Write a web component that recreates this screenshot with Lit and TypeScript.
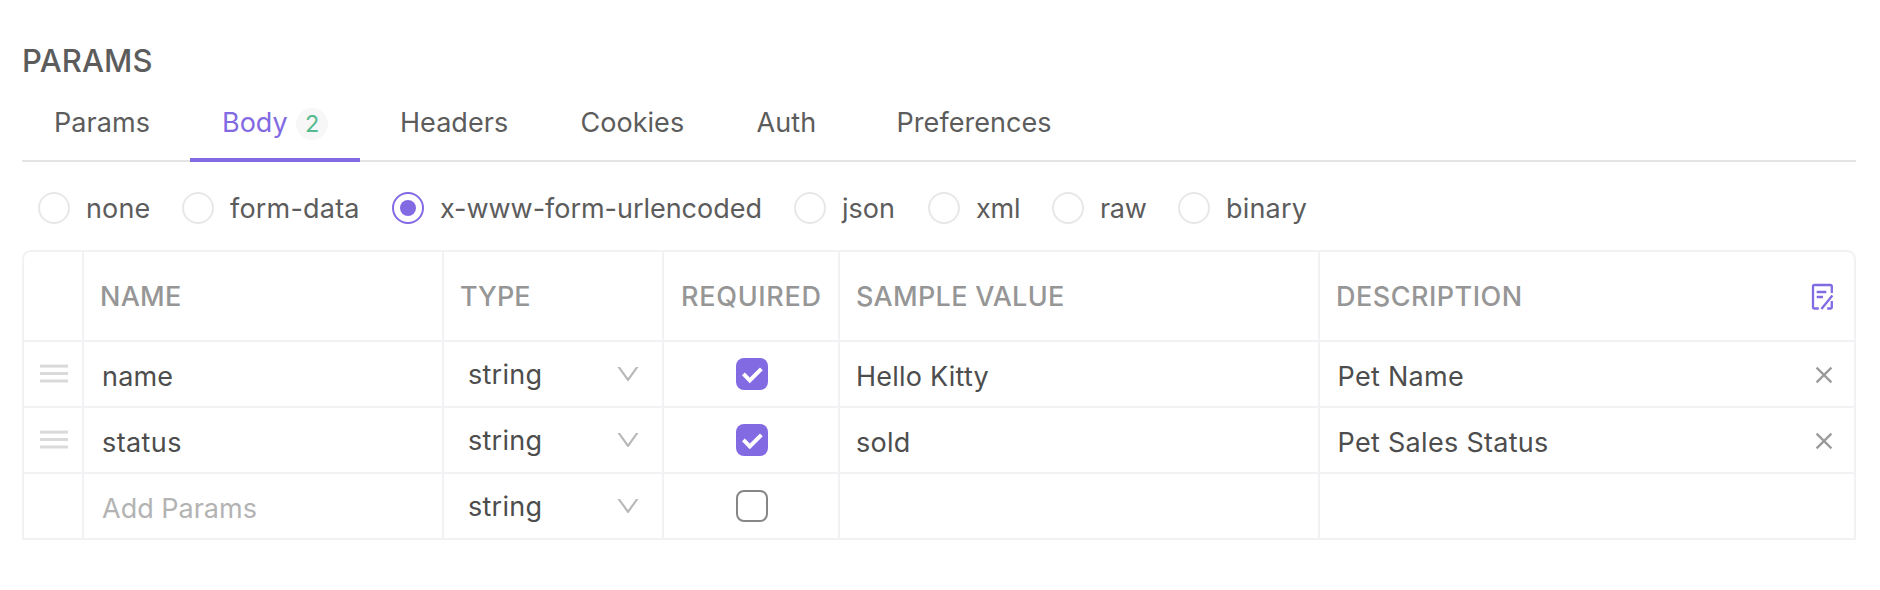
import { LitElement, html, css, svg, nothing } from "lit";
import { customElement, property, state } from "lit/decorators.js";
import { classMap } from "lit/directives/class-map.js";
import { styleMap } from "lit/directives/style-map.js";

interface Tab { label: string; width: number; tracking: number; count?: number; }
interface BodyType { label: string; width: number; tracking: number; }
interface Param { name: string; nameTracking: number; required: boolean; sample: string; description: string; blank?: boolean; }

const TABS: Tab[] = [
  { label: "Params", width: 96, tracking: 0.05 },
  { label: "Body", width: 106, tracking: 0, count: 2 },
  { label: "Headers", width: 108.5, tracking: 0.04 },
  { label: "Cookies", width: 104, tracking: 0.03 },
  { label: "Auth", width: 68, tracking: 0.1 },
  { label: "Preferences", width: 156, tracking: 0.06 },
];

const BODY_TYPES: BodyType[] = [
  { label: "none", width: 64, tracking: 0.14 },
  { label: "form-data", width: 130, tracking: 0.2 },
  { label: "x-www-form-urlencoded", width: 322, tracking: -0.03 },
  { label: "json", width: 54, tracking: 0.04 },
  { label: "xml", width: 44, tracking: -0.2 },
  { label: "raw", width: 46, tracking: -0.3 },
  { label: "binary", width: 82, tracking: 0.2 },
];

const HEADINGS = [
  { label: "", tracking: 0 },
  { label: "NAME", tracking: 0.25 },
  { label: "TYPE", tracking: 0.05 },
  { label: "REQUIRED", tracking: 0.7 },
  { label: "SAMPLE VALUE", tracking: 0.29 },
  { label: "DESCRIPTION", tracking: 0.49 },
];

const PARAMS: Param[] = [
  { name: "name", nameTracking: 0.2, required: true, sample: "Hello Kitty", description: "Pet Name" },
  { name: "status", nameTracking: 0.4, required: true, sample: "sold", description: "Pet Sales Status" },
  { name: "Add Params", nameTracking: 0, required: false, sample: "", description: "", blank: true },
];

const tracking = (v: number) => styleMap({ letterSpacing: `${v}px` });

@customElement("param-checkbox")
class ParamCheckbox extends LitElement {
  @property({ type: Boolean }) checked = false;
  static styles = css`
    :host { display: block; width: 32px; height: 32px; }
    .box { box-sizing: border-box; width: 32px; height: 32px; border-radius: 8px; border: 2px solid #868686; background: #fff; }
    .checked { border: 0; background: #826ae3; }
    svg { display: block; }
  `;
  render() {
    return html`<div class=${classMap({ box: true, checked: this.checked })}>
      ${this.checked
        ? svg`<svg width="32" height="32" viewBox="0 0 32 32"><path d="M7.4 15.9L13.8 22.4L25.4 10.9" fill="none" stroke="#fff" stroke-width="4"/></svg>`
        : nothing}
    </div>`;
  }
}

@customElement("app-root")
class AppRoot extends LitElement {
  @state() private activeTab = "Body";
  @state() private bodyType = "x-www-form-urlencoded";

  static styles = css`
    :host {
      display: block;
      box-sizing: border-box;
      height: 590px;
      padding: 43px 24px 0 22px;
      background: #fff;
      color: #5c5c5c;
      font: 400 27px/32px Inter, sans-serif;
      white-space: nowrap;
    }
    svg { display: block; flex: none; }
    h1 { margin: 0; height: 36px; font-size: 31px; line-height: 36px; font-weight: 500; letter-spacing: 0.12px; }
    .tabs {
      display: flex; gap: 8px; height: 83px; box-sizing: border-box;
      border-bottom: 2px solid #e4e4e4;
    }
    .tab {
      display: flex; gap: 8px; box-sizing: content-box; height: 51px;
      padding: 28px 32px 0; border-bottom: 4px solid transparent;
    }
    .tab.active { color: #826ae3; border-bottom-color: #826ae3; }
    .tab-label { flex: none; }
    .badge {
      width: 32px; height: 32px; margin-top: 1px; border-radius: 50%; text-indent: 1px;
      background: #f7f7f7; color: #55bb8e; font-size: 23.5px; text-align: center;
    }
    .types { display: flex; gap: 32px; padding: 30px 16px 26px; }
    .type { display: flex; gap: 16px; height: 32px; }
    .type-label { padding-top: 1px; }
    .radio {
      box-sizing: border-box; width: 32px; height: 32px; border-radius: 50%;
      border: 2px solid #e8e8e8; display: grid; place-items: center;
    }
    .radio.on { border-color: #826ae3; }
    .dot { width: 16px; height: 16px; border-radius: 50%; background: #826ae3; }
    .table { border: 2px solid #f2f2f4; border-radius: 9px 9px 0 0; }
    .row {
      display: grid; grid-template-columns: 60px 360px 220px 176px 480px 534px;
      height: 64px; color: #4d4d4d;
    }
    .row + .row { border-top: 2px solid #f2f2f4; }
    .cell {
      display: flex; align-items: center; box-sizing: border-box;
      padding: 0 16px; border-right: 2px solid #f2f2f4;
    }
    .cell:last-child { border-right: 0; justify-content: space-between; }
    .head { height: 88px; color: #969696; font-weight: 500; }
    .head .cell { padding: 2px 19px 0 16px; }
    .head .cell:nth-child(4) { padding: 2px 0 0 17px; }
    .text { padding-top: 6px; }
    .name { padding-left: 18px; }
    .kind { justify-content: space-between; padding: 0 20px 0 24px; letter-spacing: 0.25px; }
    .kind-label { padding-top: 2px; }
    .required { justify-content: center; padding-left: 18px; }
    .desc { padding-left: 17.5px; padding-right: 20px; letter-spacing: 0.3px; }
    .sample { letter-spacing: 0.22px; }
    .blank { color: #b3b3b3; }
  `;

  private tab(t: Tab) {
    const active = t.label === this.activeTab;
    return html`<div class=${classMap({ tab: true, active })} style=${styleMap({ width: `${t.width}px` })}
      @click=${() => (this.activeTab = t.label)}>
      <span class="tab-label" style=${tracking(t.tracking)}>${t.label}</span>
      ${t.count ? html`<span class="badge">${t.count}</span>` : nothing}
    </div>`;
  }

  private type(t: BodyType) {
    const on = t.label === this.bodyType;
    return html`<div class="type" @click=${() => (this.bodyType = t.label)}>
      <span class=${classMap({ radio: true, on })}>${on ? html`<span class="dot"></span>` : nothing}</span>
      <span class="type-label" style=${styleMap({ width: `${t.width}px`, letterSpacing: `${t.tracking}px` })}>${t.label}</span>
    </div>`;
  }

  private grip() {
    return svg`<svg width="28" height="20" viewBox="0 0 28 20" fill="#dadada">
      <rect y="0.6" width="28" height="3"/><rect y="8" width="28" height="3"/><rect y="15.5" width="28" height="3"/></svg>`;
  }

  private chevron() {
    return svg`<svg width="28" height="28" viewBox="0 0 1024 1024" fill="#b8b8b8">
      <path d="M884 256h-75c-5.1 0-9.9 2.5-12.9 6.6L512 654.2 227.9 262.6c-3-4.1-7.8-6.6-12.9-6.6h-75c-6.5 0-10.3 7.4-6.5 12.7l352.6 486.1c12.8 17.6 39 17.6 51.7 0l352.6-486.1c3.9-5.3.1-12.7-6.4-12.7z"/></svg>`;
  }

  private cross() {
    return svg`<svg width="20" height="20" viewBox="0 0 20 20" fill="none" stroke="#9a9a9a" stroke-width="2.3">
      <path d="M2.6 3.6L17.4 18.4M17.4 3.6L2.6 18.4"/></svg>`;
  }

  private edit() {
    return svg`<svg width="24" height="28" viewBox="0 0 24 28" fill="none" stroke="#826ae3" stroke-width="2.3">
      <path d="M20.8 10V3.6Q20.8 2 19.2 2H3.6Q2 2 2 3.6V23.9Q2 25.5 3.6 25.5H7.8M5.7 9H15.3M5.7 14H12M21.4 12.6L10.4 26M16.2 25.5H19.2Q20.8 25.5 20.8 23.9V18"/></svg>`;
  }

  private row(p: Param) {
    return html`<div class="row">
      <div class="cell">${p.blank ? nothing : this.grip()}</div>
      <div class=${classMap({ cell: true, text: true, name: true, blank: !!p.blank })}>
        <span style=${tracking(p.nameTracking)}>${p.name}</span></div>
      <div class="cell kind"><span class="kind-label">string</span>${this.chevron()}</div>
      <div class="cell required"><param-checkbox ?checked=${p.required}></param-checkbox></div>
      <div class="cell text sample">${p.sample}</div>
      <div class="cell desc"><span class="text">${p.description}</span>${p.blank ? nothing : this.cross()}</div>
    </div>`;
  }

  render() {
    return html`
      <h1>PARAMS</h1>
      <div class="tabs">${TABS.map((t) => this.tab(t))}</div>
      <div class="types">${BODY_TYPES.map((t) => this.type(t))}</div>
      <div class="table">
        <div class="row head">
          ${HEADINGS.map((h, i) => html`<div class="cell">
            <span style=${tracking(h.tracking)}>${h.label}</span>${i === HEADINGS.length - 1 ? this.edit() : nothing}
          </div>`)}
        </div>
        ${PARAMS.map((p) => this.row(p))}
      </div>`;
  }
}
